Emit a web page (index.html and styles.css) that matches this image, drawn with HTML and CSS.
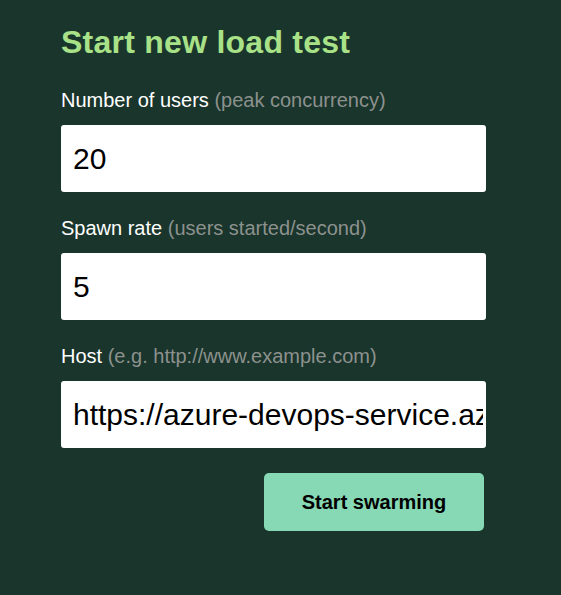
FILE: index.html
```html
<!DOCTYPE html>
<html>
<head>
<meta charset="utf-8">
<link rel="stylesheet" href="styles.css">
</head>
<body>
<main class="panel">
  <h2 class="title">Start new load test</h2>
  <form class="form">
    <label class="field">
      <span class="label">Number of users <span class="hint">(peak concurrency)</span></span>
      <input class="input" type="text" value="20">
    </label>
    <label class="field">
      <span class="label">Spawn rate <span class="hint">(users started/second)</span></span>
      <input class="input" type="text" value="5">
    </label>
    <label class="field">
      <span class="label">Host <span class="hint">(e.g. http://www.example.com)</span></span>
      <input class="input" type="text" value="https://azure-devops-service.azurewebsites.net">
    </label>
    <div class="actions">
      <button class="btn" type="button">Start swarming</button>
    </div>
  </form>
</main>
</body>
</html>
```
FILE: styles.css
```css
html, body {
  margin: 0;
  padding: 0;
  background: #1a352b;
  font-family: "Liberation Sans", Arial, sans-serif;
}
.panel {
  width: 425px;
  padding: 24px 0 0 61px;
}
.title {
  margin: 0;
  font-size: 32px;
  font-weight: bold;
  line-height: 37px;
  letter-spacing: 0.25px;
  color: #a8e187;
}
.form {
  display: flex;
  flex-direction: column;
  margin-top: 28px;
}
.field {
  display: flex;
  flex-direction: column;
  gap: 13px;
  margin-bottom: 25px;
}
.label {
  font-size: 20px;
  line-height: 23px;
  color: #ffffff;
  height: 23px;
}
.hint {
  color: #8c918e;
}
.input {
  box-sizing: border-box;
  width: 425px;
  height: 67px;
  border: none;
  border-radius: 3px;
  background: #ffffff;
  padding: 0 3px 0 12px;
  font-family: "Liberation Sans", Arial, sans-serif;
  font-size: 30px;
  color: #000000;
  outline: none;
}
.actions {
  display: flex;
  justify-content: flex-end;
  padding-right: 2px;
}
.btn {
  width: 220px;
  height: 58px;
  border: none;
  border-radius: 5px;
  background: #87d9b6;
  color: #000000;
  font-family: "Liberation Sans", Arial, sans-serif;
  font-weight: bold;
  font-size: 20px;
}
```
